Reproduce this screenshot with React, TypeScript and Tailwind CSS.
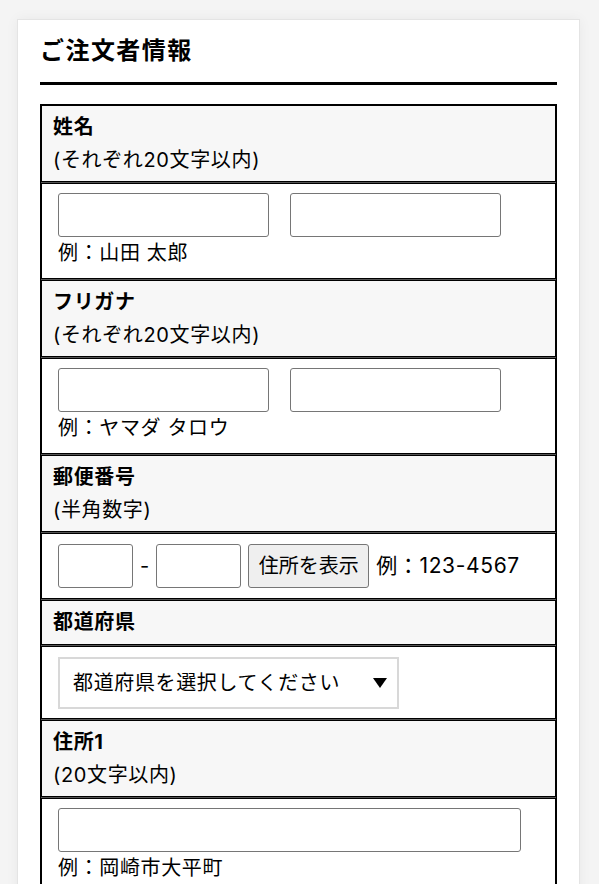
import React from 'react'

const font = { fontFamily: 'Inter, "Noto Sans CJK JP", sans-serif' }

function Header({ label, note }: { label: string; note?: string }) {
  return (
    <div className="border border-black bg-[#f7f7f7] px-[11px] py-[5px] text-[20px]">
      <div className="font-bold leading-[33px]">{label}</div>
      {note && <div className="leading-[32px]">{note}</div>}
    </div>
  )
}

function Cell({ children, className = 'pt-[9px] pb-[9px]' }: { children: React.ReactNode; className?: string }) {
  return <div className={`border border-black bg-white pl-[16px] ${className}`}>{children}</div>
}

const inputCls = 'h-[44px] rounded-[3px] border border-[#767676] bg-white'

export default function App() {
  return (
    <div className="min-h-screen bg-[#f4f4f4] pt-[19px] pl-[17px] pr-[19px] text-black tracking-[0.04em]" style={font}>
      <div className="bg-white border border-[#e4e4e4] shadow-[0_0_12px_rgba(0,0,0,0.05)] px-[22px] pt-[14px] pb-10">
        <h2 className="text-[24px] font-bold leading-[33px] pb-[15px] border-b-[3px] border-black tracking-[0.06em]">
          ご注文者情報
        </h2>

        <div className="mt-[19px] flex flex-col gap-[1px] border border-black bg-[#555]">
          <Header label="姓名" note="(それぞれ20文字以内)" />
          <Cell>
            <div className="flex gap-[21px]">
              <div className={`${inputCls} w-[211px]`} />
              <div className={`${inputCls} w-[211px]`} />
            </div>
            <div className="text-[20px] leading-[32px]">例：山田 太郎</div>
          </Cell>

          <Header label="フリガナ" note="(それぞれ20文字以内)" />
          <Cell>
            <div className="flex gap-[21px]">
              <div className={`${inputCls} w-[211px]`} />
              <div className={`${inputCls} w-[211px]`} />
            </div>
            <div className="text-[20px] leading-[32px]">例：ヤマダ タロウ</div>
          </Cell>

          <Header label="郵便番号" note="(半角数字)" />
          <Cell className="pt-[10px] pb-[10px]">
            <div className="flex items-center gap-[7px]">
              <div className={`${inputCls} w-[75px]`} />
              <span className="text-[20px] tracking-normal">-</span>
              <div className={`${inputCls} w-[85px]`} />
              <button className="h-[44px] w-[121px] rounded-[3px] border border-[#767676] bg-[#efefef] text-[20px] tracking-normal">
                住所を表示
              </button>
              <span className="text-[21px]">例：123-4567</span>
            </div>
          </Cell>

          <Header label="都道府県" />
          <Cell className="pt-[10px] pb-[9px]">
            <div className="flex h-[52px] w-[341px] items-center justify-between border-2 border-[#d8d8d8] pl-[13px] pr-[10px]">
              <span className="text-[20px]">都道府県を選択してください</span>
              <svg width="14" height="10" viewBox="0 0 14 10">
                <path d="M0 0 H14 L7 10 Z" fill="#000" />
              </svg>
            </div>
          </Cell>

          <Header label="住所1" note="(20文字以内)" />
          <Cell>
            <div className={`${inputCls} w-[463px]`} />
            <div className="text-[20px] leading-[32px]">例：岡崎市大平町</div>
          </Cell>
        </div>
      </div>
    </div>
  )
}
